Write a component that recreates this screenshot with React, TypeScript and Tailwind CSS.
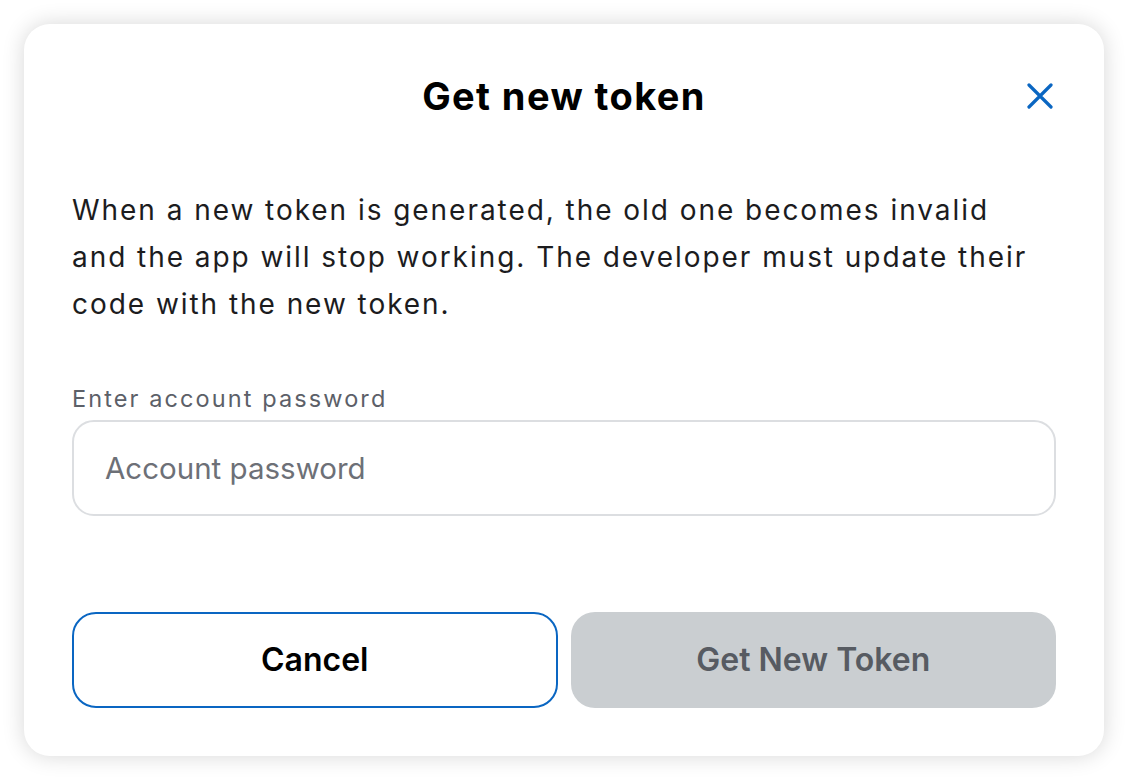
import React from 'react';

// Dialog asking for the account password before issuing a new token
const CloseIcon: React.FC = () => (
  <svg className="w-[26px] h-[26px]" viewBox="0 0 26 26" fill="none" stroke="currentColor">
    <path strokeLinecap="round" strokeWidth={3.2} d="M2 2l22 22M24 2L2 24" />
  </svg>
);

const App: React.FC = () => {
  return (
    <div className="min-h-screen w-full bg-white p-6 font-['Inter','Liberation_Sans',sans-serif]">
      <div className="flex h-[732px] w-[1080px] flex-col rounded-[26px] bg-white px-12 pt-[46px] pb-12 shadow-[0_0_22px_rgba(0,0,0,0.16)]">
        {/* Header */}
        <div className="relative flex items-center justify-center">
          <h1 className="text-[38px] font-bold leading-[52px] tracking-[1.4px] text-black">
            Get new token
          </h1>
          <button
            aria-label="Close"
            className="absolute right-[3px] top-1/2 -translate-y-1/2 text-[#0a66c2]"
          >
            <CloseIcon />
          </button>
        </div>

        {/* Body */}
        <p className="mt-[65px] max-w-[975px] text-[28px] leading-[47px] tracking-[1.95px] text-[#1c1c1e]">
          When a new token is generated, the old one becomes invalid and the app will stop
          working. The developer must update their code with the new token.
        </p>

        <label className="mt-[54px] block text-[23.5px] leading-[34px] tracking-[2.1px] text-[#5c6068]">
          Enter account password
        </label>
        <input
          type="password"
          placeholder="Account password"
          className="mt-[4px] h-[96px] w-full rounded-[22px] border-2 border-[#dcdee1] px-[31px] text-[29.5px] text-[#1c1c1e] outline-none placeholder:text-[#6d7077]"
        />

        {/* Actions */}
        <div className="mt-auto grid grid-cols-2 gap-[13px]">
          <button className="h-[96px] rounded-[24px] border-2 border-[#0a66c2] bg-white text-[32px] font-semibold text-black">
            Cancel
          </button>
          <button
            disabled
            className="h-[96px] rounded-[24px] bg-[#caced1] text-[32px] font-semibold text-[#575b62]"
          >
            Get New Token
          </button>
        </div>
      </div>
    </div>
  );
};

export default App;
